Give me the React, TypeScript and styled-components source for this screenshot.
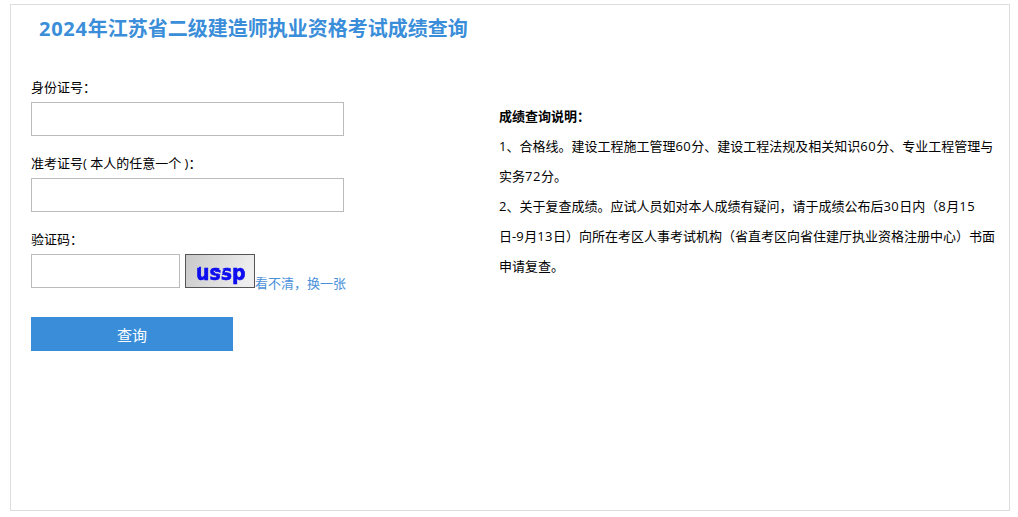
import React from "react";
import styled, { createGlobalStyle } from "styled-components";

const Global = createGlobalStyle`
  html, body { margin: 0; padding: 0; background: #fff; }
  body { font-family: "Open Sans", "Noto Sans CJK SC", sans-serif; font-size: 13px; color: #000; }
`;

const Panel = styled.main`
  box-sizing: border-box;
  width: 1000px;
  height: 507px;
  margin: 4px 0 0 10px;
  border: 1px solid #ddd;
`;

const Title = styled.h1`
  margin: 0;
  padding: 7px 0 0 28px;
  height: 34px;
  font-size: 20px;
  line-height: 34px;
  font-weight: 700;
  color: #3a8ed9;
`;

const TitleYear = styled.span`
  letter-spacing: 0.75px;
`;

const Columns = styled.div`
  display: flex;
  margin-top: 30px;
`;

const Form = styled.form`
  width: 468px;
  padding-left: 20px;
  box-sizing: border-box;
`;

const Field = styled.div`
  height: 76px;
`;

const Label = styled.label`
  display: block;
  height: 26px;
  line-height: 22px;
  font-size: 13px;
`;

const Input = styled.input<{ $width: number }>`
  box-sizing: border-box;
  display: block;
  width: ${(p) => p.$width}px;
  height: 34px;
  margin: 0;
  border: 1px solid #bbb;
  background: #fff;
  outline: none;
`;

const CaptchaRow = styled.div`
  display: flex;
  align-items: flex-end;
`;

const CaptchaImage = styled.svg`
  display: block;
  width: 70px;
  height: 34px;
  margin-left: 5px;
`;

const RefreshLink = styled.a`
  color: #4a90d9;
  font-size: 13px;
  line-height: 10px;
  text-decoration: none;
`;

const Submit = styled.button`
  display: block;
  width: 202px;
  height: 34px;
  margin-top: 13px;
  padding: 0;
  border: none;
  background: #3a8ed9;
  color: #fff;
  font-family: inherit;
  font-size: 15px;
`;

const Notes = styled.section`
  flex: 1;
  padding: 0 10px 0 20px;
  margin-top: 25px;
  line-height: 30px;
  font-size: 13px;
`;

const Note = styled.p`
  margin: 0;
`;

const NoteTitle = styled(Note)`
  font-weight: 700;
`;

const Num = styled.span`
  letter-spacing: 0.5px;
`;

export default function App() {
  return (
    <>
      <Global />
      <Panel>
        <Title>
          <TitleYear>2024</TitleYear>年江苏省二级建造师执业资格考试成绩查询
        </Title>
        <Columns>
          <Form>
            <Field>
              <Label>身份证号：</Label>
              <Input $width={313} />
            </Field>
            <Field>
              <Label>准考证号( 本人的任意一个 )：</Label>
              <Input $width={313} />
            </Field>
            <Field>
              <Label>验证码：</Label>
              <CaptchaRow>
                <Input $width={149} />
                <CaptchaImage viewBox="0 0 70 34" role="img" aria-label="ussp">
                  <defs>
                    <linearGradient id="captchaBg" x1="0" y1="0" x2="1" y2="0.2">
                      <stop offset="0" stopColor="#c8c8c8" />
                      <stop offset="1" stopColor="#eeeeee" />
                    </linearGradient>
                    <filter id="captchaWarp" x="-10%" y="-10%" width="120%" height="120%">
                      <feTurbulence type="fractalNoise" baseFrequency="0.07" numOctaves="1" seed="4" />
                      <feDisplacementMap in="SourceGraphic" scale="3" />
                      <feGaussianBlur stdDeviation="0.4" />
                    </filter>
                  </defs>
                  <rect x="0.5" y="0.5" width="69" height="33" fill="url(#captchaBg)" stroke="#555" />
                  <text
                    transform="translate(11 26) scale(0.86 1)"
                    fontFamily="'DejaVu Sans', sans-serif"
                    fontWeight="700"
                    fontSize="22"
                    fill="#0808f0"
                    stroke="#0808f0"
                    strokeWidth="0.6"
                    filter="url(#captchaWarp)"
                  >
                    ussp
                  </text>
                </CaptchaImage>
                <RefreshLink href="#">看不清，换一张</RefreshLink>
              </CaptchaRow>
            </Field>
            <Submit type="button">查询</Submit>
          </Form>
          <Notes>
            <NoteTitle>成绩查询说明：</NoteTitle>
            <Note>
              1、合格线。建设工程施工管理<Num>60</Num>分、建设工程法规及相关知识<Num>60</Num>分、专业工程管理与
              <br />
              实务<Num>72</Num>分。
            </Note>
            <Note>
              2、关于复查成绩。应试人员如对本人成绩有疑问，请于成绩公布后<Num>30</Num>日内（<Num>8</Num>月<Num>15</Num>
              <br />
              日-<Num>9</Num>月<Num>13</Num>日）向所在考区人事考试机构（省直考区向省住建厅执业资格注册中心）书面
              <br />
              申请复查。
            </Note>
          </Notes>
        </Columns>
      </Panel>
    </>
  );
}
